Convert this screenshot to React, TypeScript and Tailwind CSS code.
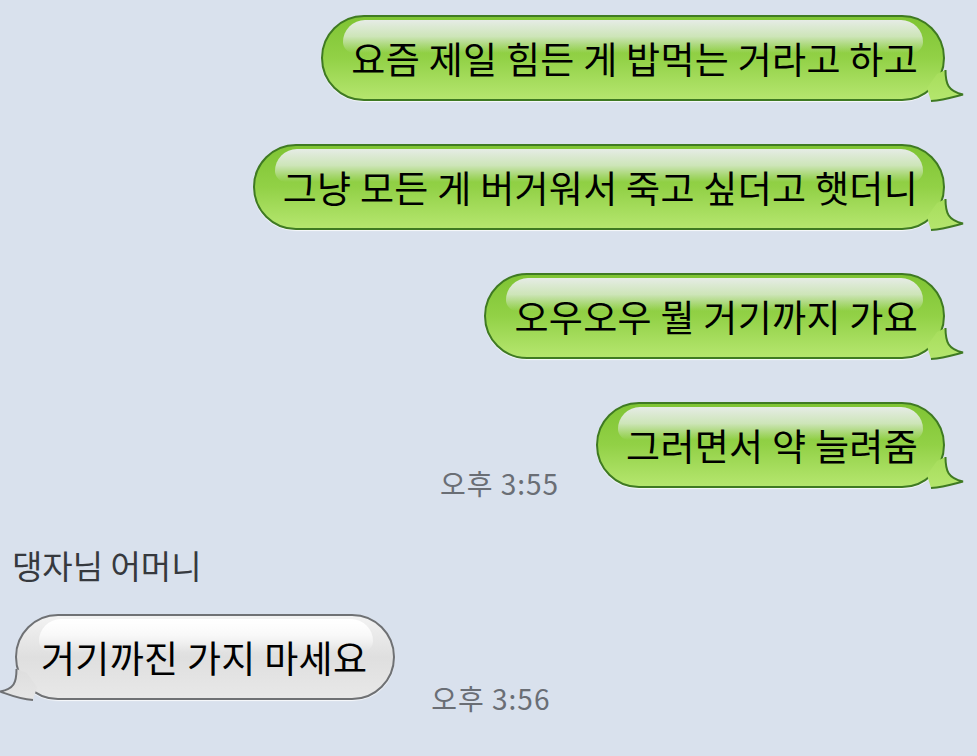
import React from "react";

const FONT = "font-['Noto_Sans_CJK_KR','Noto_Sans',sans-serif]";

function GreenTail() {
  return (
    <svg
      className="absolute right-[-20px] bottom-[-1px] pointer-events-none"
      width="50"
      height="32"
      viewBox="0 0 50 32"
    >
      <defs>
        <linearGradient id="gt" x1="0" y1="0" x2="0" y2="1">
          <stop offset="0" stopColor="#a6dd5b" />
          <stop offset="1" stopColor="#b5e66e" />
        </linearGradient>
      </defs>
      <path
        d="M30.5 0 C30.5 14 33 21 48 24.5 C38 27 30 30 16 31 L12 18 L22 4 Z"
        fill="url(#gt)"
      />
      <path
        d="M30.5 0 C30.5 14 33 21 48 24.5 C38 27 30 30 16 31"
        fill="none"
        stroke="#3f7a22"
        strokeWidth="2"
      />
    </svg>
  );
}

function GrayTail() {
  return (
    <svg
      className="absolute left-[-16px] bottom-[-1px] pointer-events-none"
      width="50"
      height="32"
      viewBox="0 0 50 32"
    >
      <defs>
        <linearGradient id="gg" x1="0" y1="0" x2="0" y2="1">
          <stop offset="0" stopColor="#dedede" />
          <stop offset="1" stopColor="#e6e6e6" />
        </linearGradient>
      </defs>
      <path
        d="M17.5 0 C17.5 14 15 20 1 22.5 C11 26 20 30 34 31 L38 18 L28 4 Z"
        fill="url(#gg)"
      />
      <path
        d="M17.5 0 C17.5 14 15 20 1 22.5 C11 26 20 30 34 31"
        fill="none"
        stroke="#6f7174"
        strokeWidth="2"
      />
    </svg>
  );
}

function GreenBubble({ text }: { text: string }) {
  return (
    <div className="relative">
      <div className="relative h-[86px] rounded-[43px] border-2 border-[#3f7a22] bg-gradient-to-b from-[#7fc433] via-[#92d146] to-[#b5e66e] pl-[28px] pr-[25px] flex items-center shadow-[0_1px_1px_rgba(255,255,255,0.8)]">
        <div className="absolute top-[3px] left-[20px] right-[20px] h-[33px] rounded-t-[28px] rounded-b-[14px] bg-gradient-to-b from-[#e6ece6] via-[#d5e8c6]/90 to-[#a8d872]/0" />
        <span className="relative text-[37px] leading-none text-black tracking-[0.3px] whitespace-nowrap">
          {text}
        </span>
      </div>
      <GreenTail />
    </div>
  );
}

function GrayBubble({ text }: { text: string }) {
  return (
    <div className="relative">
      <div className="relative h-[86px] rounded-[43px] border-2 border-[#6f7174] bg-gradient-to-b from-[#f3f3f3] via-[#dfdfdf] to-[#e8e8e8] pl-[24px] pr-[26px] flex items-center shadow-[0_1px_1px_rgba(255,255,255,0.8)]">
        <div className="absolute top-[3px] left-[22px] right-[20px] h-[33px] rounded-t-[28px] rounded-b-[14px] bg-gradient-to-b from-white via-white/70 to-white/0" />
        <span className="relative text-[37px] leading-none text-black tracking-[0.3px] whitespace-nowrap">
          {text}
        </span>
      </div>
      <GrayTail />
    </div>
  );
}

export default function App() {
  return (
    <div className={`w-[977px] h-[756px] overflow-hidden bg-[#d9e1ed] ${FONT}`}>
      <div className="flex flex-col items-end pr-[32px] pt-[15px] gap-[43px]">
        <GreenBubble text="요즘 제일 힘든 게 밥먹는 거라고 하고" />
        <GreenBubble text="그냥 모든 게 버거워서 죽고 싶더고 햇더니" />
        <GreenBubble text="오우오우 뭘 거기까지 가요" />
        <div className="flex items-end gap-[37px]">
          <span className="text-[28px] leading-none tracking-[1px] text-[#6a6e75] mb-[-9px]">오후 3:55</span>
          <GreenBubble text="그러면서 약 늘려줌" />
        </div>
      </div>
      <div className="pl-[12px] mt-[61px] text-[33px] leading-none text-[#36393e]">
        댕자님 어머니
      </div>
      <div className="flex items-end gap-[36px] pl-[15px] mt-[32px]">
        <GrayBubble text="거기까진 가지 마세요" />
        <span className="text-[28px] leading-none tracking-[1px] text-[#6a6e75] mb-[-12px]">오후 3:56</span>
      </div>
    </div>
  );
}
